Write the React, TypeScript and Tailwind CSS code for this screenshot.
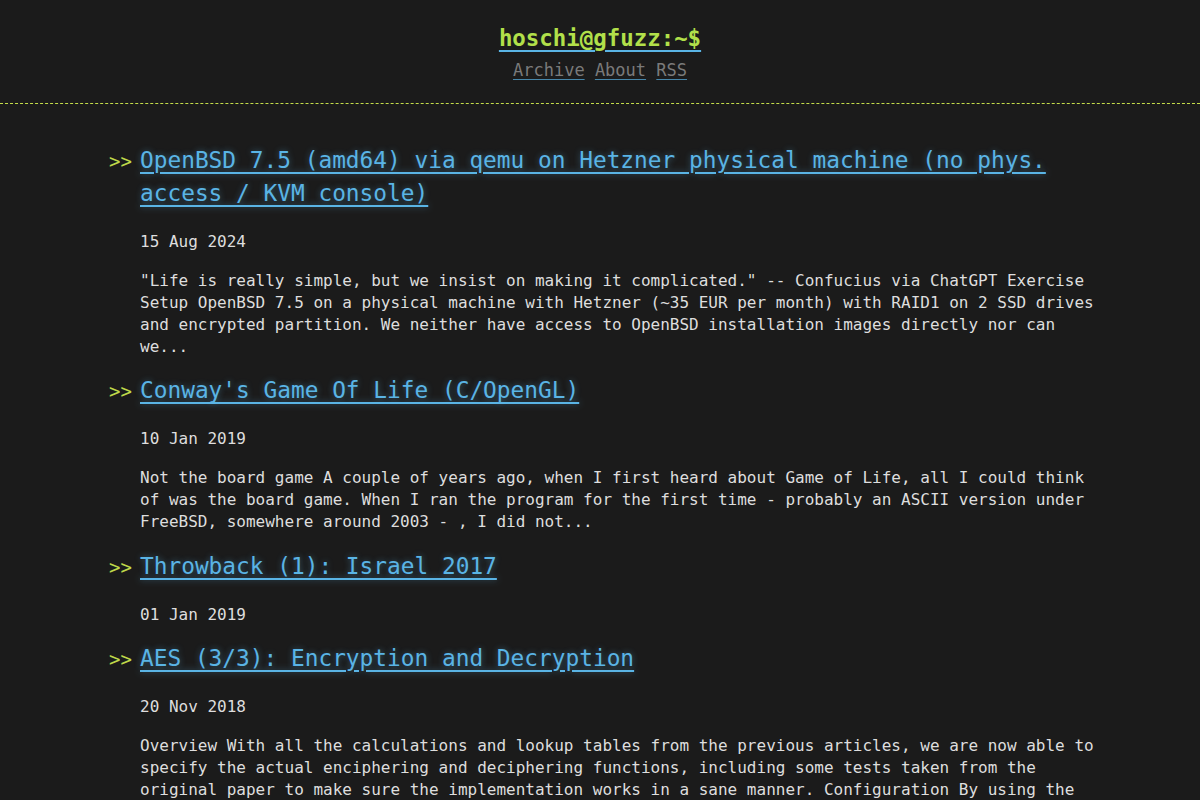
const posts = [
  {
    title: "OpenBSD 7.5 (amd64) via qemu on Hetzner physical machine (no phys. access / KVM console)",
    date: "15 Aug 2024",
    excerpt:
      '"Life is really simple, but we insist on making it complicated." -- Confucius via ChatGPT Exercise Setup OpenBSD 7.5 on a physical machine with Hetzner (~35 EUR per month) with RAID1 on 2 SSD drives and encrypted partition. We neither have access to OpenBSD installation images directly nor can we...',
  },
  {
    title: "Conway's Game Of Life (C/OpenGL)",
    date: "10 Jan 2019",
    excerpt:
      "Not the board game A couple of years ago, when I first heard about Game of Life, all I could think of was the board game. When I ran the program for the first time - probably an ASCII version under FreeBSD, somewhere around 2003 - , I did not...",
  },
  {
    title: "Throwback (1): Israel 2017",
    date: "01 Jan 2019",
    excerpt: "",
  },
  {
    title: "AES (3/3): Encryption and Decryption",
    date: "20 Nov 2018",
    excerpt:
      "Overview With all the calculations and lookup tables from the previous articles, we are now able to specify the actual enciphering and deciphering functions, including some tests taken from the original paper to make sure the implementation works in a sane manner. Configuration By using the Cipher struct we can...",
  },
];

export default function App() {
  return (
    <div className="min-h-screen bg-[#1b1b1b] text-[#dedede] font-['DejaVu_Sans_Mono',monospace] text-[16px] leading-[22px]">
      {/* Header */}
      <header className="pt-[22px] pb-[21px] text-center border-b border-dashed border-[#c4dc4a]">
        <h1 className="text-[22.4px] leading-[32px] font-bold">
          <a href="#" className="text-[#b2e04a] underline decoration-[#5ab4e5] underline-offset-[4px]">
            hoschi@gfuzz:~$
          </a>
        </h1>
        <nav className="text-[17px] leading-[24px] mt-[4px] text-[#7a7a7a]">
          <a href="#" className="underline decoration-[#5ab4e5]/70 underline-offset-[3px]">Archive</a>{" "}
          <a href="#" className="underline decoration-[#5ab4e5]/70 underline-offset-[3px]">About</a>{" "}
          <a href="#" className="underline decoration-[#5ab4e5]/70 underline-offset-[3px]">RSS</a>
        </nav>
      </header>

      {/* Posts */}
      <main className="max-w-[1000px] mx-auto pt-[40px]">
        <ul>
          {posts.map((post) => (
            <li key={post.title} className="relative pl-[40px]">
              <h2 className="text-[22.8px] leading-[33px] mb-[21px]">
                <span className="absolute left-[9px] top-[1px] text-[19px] leading-[33px] text-[#bfd84a]">&gt;&gt;</span>
                <a
                  href="#"
                  className="text-[#5ab4e5] underline decoration-[#5ab4e5] underline-offset-[4px] [text-shadow:0_0_6px_rgba(90,180,229,0.45)]"
                >
                  {post.title}
                </a>
              </h2>
              {post.excerpt ? (
                <>
                  <p className="mb-[17px]">{post.date}</p>
                  <p className="mb-[16.4px]">{post.excerpt}</p>
                </>
              ) : (
                <p className="mb-[16px]">{post.date}</p>
              )}
            </li>
          ))}
        </ul>
      </main>
    </div>
  );
}
